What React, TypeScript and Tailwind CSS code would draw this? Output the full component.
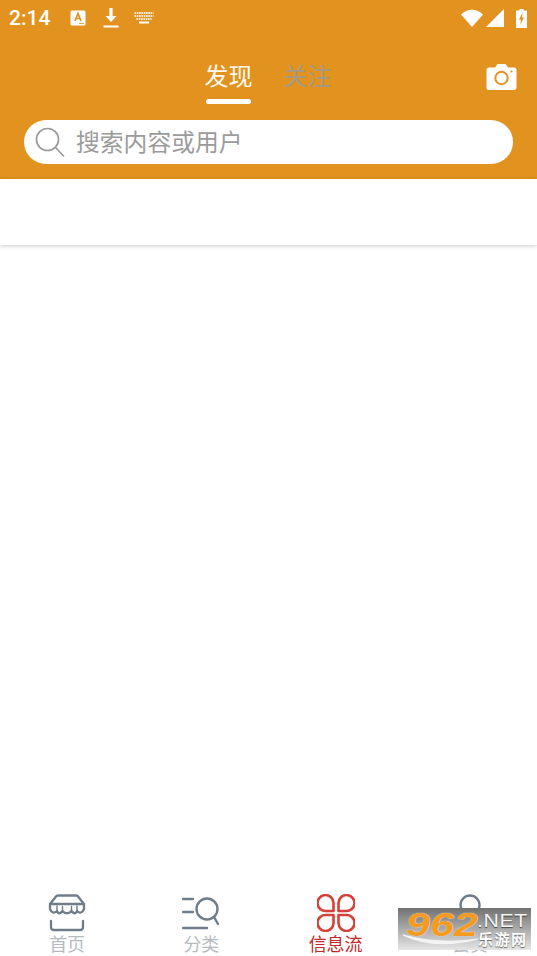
import React from "react";

const cjk = "font-['Roboto','Noto_Sans_CJK_SC',sans-serif]";

function NavItem({ label, color, icon }: { label: string; color: string; icon: React.ReactNode }) {
  return (
    <div className="flex flex-1 flex-col items-center">
      <div className="h-[38px] w-[38px]">{icon}</div>
      <span className={`text-[18px] leading-[20px] mt-[3px] ${color}`}>{label}</span>
    </div>
  );
}

export default function App() {
  return (
    <div className={`flex h-[956px] w-[537px] flex-col overflow-hidden bg-white relative ${cjk}`}>
      <header className="h-[179px] shrink-0 bg-[#e2921e] flex flex-col border-b border-[#f8dfa6] box-content -mb-[1px]">
        {/* status bar */}
        <div className="flex h-[36px] items-center pl-[9px] pr-[10px] text-white">
          <span className="text-[21px] font-medium leading-none w-[61px] font-['Roboto',sans-serif]">2:14</span>
          <svg width="16" height="16" viewBox="0 0 16 16">
            <rect x="0.5" y="0.5" width="15" height="15" rx="1.5" fill="#fff" />
            <path d="M5 11 L8 3.5 L11 11 M6.2 8.5 H9.8" fill="none" stroke="#e2921e" strokeWidth="1.7" />
            <path d="M9 13.5 H14" stroke="#e2921e" strokeWidth="0.8" />
          </svg>
          <svg width="18" height="22" viewBox="0 0 18 22" className="ml-[16px]">
            <path d="M7.4 1 H10.6 V9 H14.5 L9 15 L3.5 9 H7.4 Z" fill="#fff" />
            <rect x="1.5" y="18.5" width="15" height="2" fill="#fff" />
          </svg>
          <svg width="20" height="12" viewBox="0 0 20 12" className="ml-[14px]">
            <g fill="#fff">
              <path d="M0.5 1 H19.5" stroke="#fff" strokeWidth="2" strokeDasharray="1.6 0.7" opacity="0.85" />
              <path d="M0.5 4 H19.5" stroke="#fff" strokeWidth="2" strokeDasharray="1.6 0.7" opacity="0.85" />
              <path d="M2.5 7 H17.5" stroke="#fff" strokeWidth="2" strokeDasharray="1.6 0.7" opacity="0.85" />
              <rect x="5" y="9.5" width="10" height="2" />
            </g>
          </svg>
          <div className="ml-auto flex items-center">
            <svg width="22" height="18" viewBox="0 0 22 18">
              <path d="M0 5.5 C6 -1 16 -1 22 5.5 L11 18 Z" fill="#fff" />
            </svg>
            <svg width="18" height="18" viewBox="0 0 18 18" className="ml-[3px]">
              <path d="M18 0 V18 H0 Z" fill="#fff" />
            </svg>
            <svg width="11" height="19" viewBox="0 0 11 19" className="ml-[12px]">
              <path d="M3.5 0 H7.5 V1.5 H11 V19 H0 V1.5 H3.5 Z" fill="#fff" />
              <path d="M6.5 3.5 L3 10.5 H5 L4.2 16 L8 8.5 H6 Z" fill="#e2921e" />
            </svg>
          </div>
        </div>

        {/* tabs */}
        <div className="relative flex h-[84px] justify-center pr-[1px] pt-[24px] box-border">
          <div className="flex gap-[31px]">
            <div className="flex flex-col items-center">
              <span className="text-[24px] leading-[34px] text-[#fffaf0]">发现</span>
              <span className="mt-[5px] h-[5px] w-[45px] rounded-full bg-white" />
            </div>
            <span className="text-[24px] leading-[34px] text-[#a39a86]">关注</span>
          </div>
          <svg width="31" height="28" viewBox="0 0 31 28" className="absolute right-[20px] top-[27px]">
            <path d="M3 4.5 H9 L11.5 1 H19.5 L22 4.5 H28 Q30.5 4.5 30.5 7 V25 Q30.5 27 28 27 H3 Q0.5 27 0.5 25 V7 Q0.5 4.5 3 4.5 Z" fill="#fff" />
            <circle cx="15.5" cy="15" r="6.2" fill="none" stroke="#e2921e" strokeWidth="2" />
            <circle cx="25.5" cy="8.5" r="1.1" fill="#e2921e" />
          </svg>
        </div>

        {/* search */}
        <div className="px-[24px]">
          <div className="flex h-[44px] w-[489px] items-center rounded-full bg-white pl-[11px]">
            <svg width="30" height="30" viewBox="0 0 30 30" fill="none" stroke="#9a9a9a" strokeWidth="1.7">
              <circle cx="12.5" cy="12.5" r="11" />
              <path d="M20.5 20.5 L28.5 29" strokeLinecap="round" />
            </svg>
            <span className="ml-[11px] pt-[3px] text-[23.8px] leading-none text-[#9b9b9b]">搜索内容或用户</span>
          </div>
        </div>
      </header>

      {/* empty strip under the header */}
      <div className="relative z-10 h-[66px] shrink-0 bg-white shadow-[0_1px_4px_rgba(0,0,0,0.2)]" />

      <main className="flex-1 bg-white" />

      {/* bottom nav */}
      <nav className="flex h-[62px] shrink-0 bg-white">
        <NavItem
          label="首页"
          color="text-[#b5bac0]"
          icon={
            <svg viewBox="0 0 38 38" fill="none" stroke="#6f7d8a" strokeWidth="2.3" strokeLinecap="round" strokeLinejoin="round">
              <path d="M8 2.5 Q8.5 1.5 10 1.5 H28 Q29.5 1.5 30 2.5 L36 10 V15 Q33.5 21 29 17 Q27 21.5 23.5 17 Q19 21.5 14.5 17 Q11 21.5 9 17 Q4.5 21 2 15 V10 Z" />
              <path d="M2.5 10 H35.5" />
              <path d="M9 12 V17 M14.5 12.5 V17 M23.5 12.5 V17 M29 12 V17" strokeWidth="1.4" />
              <path d="M3 27 V33 Q3 36 6 36 H32 Q35 36 35 33 V27" />
            </svg>
          }
        />
        <NavItem
          label="分类"
          color="text-[#b5bac0]"
          icon={
            <svg viewBox="0 0 38 38" fill="none" stroke="#6f7d8a" strokeWidth="2.4" strokeLinecap="round">
              <path d="M1 5 H11 M1 18 H11 M1 34 H25" />
              <circle cx="25" cy="15" r="10.5" />
              <path d="M32 23 L36 30" />
            </svg>
          }
        />
        <NavItem
          label="信息流"
          color="text-[#c0282a]"
          icon={
            <svg viewBox="0 0 38 38" fill="none" stroke="#d6403a" strokeWidth="2.6" strokeLinejoin="round">
              <path d="M16.5 17 H9.5 A8 8 0 1 1 16.5 9 Z" />
              <path d="M21.5 17 H28.5 A8 8 0 1 0 21.5 9 Z" />
              <path d="M16.5 21 H9.5 A8 8 0 1 0 16.5 29 Z" />
              <path d="M21.5 21 H28.5 A8 8 0 1 1 21.5 29 Z" />
            </svg>
          }
        />
        <NavItem
          label="会员"
          color="text-[#b5bac0]"
          icon={
            <svg viewBox="0 0 38 38" fill="none" stroke="#6f7d8a" strokeWidth="2.4">
              <circle cx="19" cy="11" r="9.5" />
            </svg>
          }
        />
      </nav>

      {/* watermark */}
      <div className="absolute left-[398px] top-[908px] h-[42px] w-[133px] overflow-hidden bg-gradient-to-b from-[#727272] via-[#ababab] to-[#e6e6e6]">
        <svg width="133" height="42" viewBox="0 0 133 42" className="absolute left-0 top-0">
          <path d="M5 27 Q36 42 80 31 Q42 37 5 27 Z" fill="#f4f4f4" stroke="#f4f4f4" strokeWidth="1.2" />
        </svg>
        <span className="absolute left-[8px] top-[-3px] origin-left scale-x-[1.27] font-['Liberation_Sans',sans-serif] text-[34px] font-bold italic leading-[38px] text-[#f39a1f] [text-shadow:0_0_1px_#fff]">962</span>
        <span className="absolute left-[79px] top-[1px] origin-left scale-x-[1.18] font-['Liberation_Sans',sans-serif] text-[18px] leading-[24px] tracking-[0.5px] text-[#f4f4f4] [text-shadow:0_1px_1px_#444]">.NET</span>
        <span className="absolute left-[80px] top-[22px] text-[15px] font-bold leading-[20px] tracking-[1.5px] text-white [text-shadow:0_1px_1px_#666]">乐游网</span>
      </div>
    </div>
  );
}
